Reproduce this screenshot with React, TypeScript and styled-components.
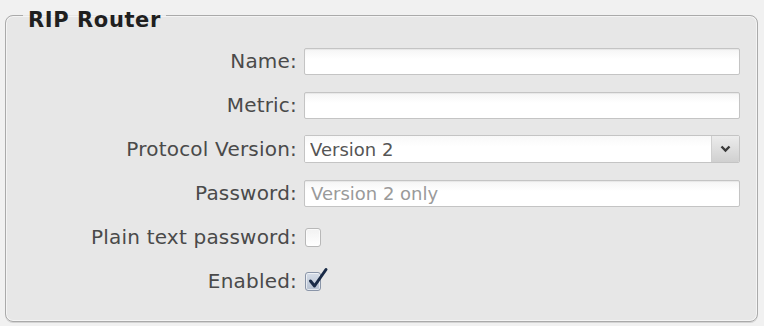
import React from "react";
import styled, { createGlobalStyle } from "styled-components";

const Global = createGlobalStyle`
  html, body { margin: 0; padding: 0; }
  body {
    background: #f1f1f1;
    font-family: "DejaVu Sans", Verdana, sans-serif;
    width: 764px;
    height: 326px;
    overflow: hidden;
  }
`;

const Page = styled.div`
  padding: 0 6px 0 5px;
`;

const Fieldset = styled.fieldset`
  margin: 0;
  padding: 8px 17px 18px 0;
  width: 753px;
  box-sizing: border-box;
  border: 1px solid #aaaaaa;
  border-radius: 8px;
  background: #e7e7e7;
  box-shadow: inset 0 0 0 1px rgba(255, 255, 255, 0.55), 0 1px 0 #d4d4d4;
  min-width: 0;
`;

const Legend = styled.legend`
  margin-left: 17px;
  padding: 9px 5px 0 5px;
  font-size: 21px;
  line-height: 22px;
  font-weight: bold;
  color: #1f1f1f;
  letter-spacing: 0.6px;
`;

const Grid = styled.div`
  display: grid;
  grid-template-columns: 291px 436px;
  column-gap: 7px;
  grid-auto-rows: 44px;
  align-items: center;
`;

const Label = styled.label`
  justify-self: end;
  font-size: 20px;
  color: #4a4a4a;
  white-space: nowrap;
  line-height: 24px;
  letter-spacing: 0.2px;
`;

const TextInput = styled.input`
  box-sizing: border-box;
  width: 100%;
  height: 27px;
  margin: 0;
  padding: 0 6px;
  border: 1px solid #c4c4c4;
  border-radius: 2px;
  background: linear-gradient(#f5f5f5, #ffffff 40%);
  box-shadow: inset 0 1px 1px rgba(0, 0, 0, 0.06);
  font-family: "DejaVu Sans", Verdana, sans-serif;
  font-size: 18px;
  color: #555;
  outline: none;
  &::placeholder {
    color: #9a9a9a;
  }
`;

const SelectBox = styled.div`
  display: flex;
  box-sizing: border-box;
  height: 28px;
  border: 1px solid #c4c4c4;
  border-radius: 2px;
  background: #fff;
  overflow: hidden;
`;

const Select = styled.select`
  flex: 1;
  appearance: none;
  -webkit-appearance: none;
  border: none;
  margin: 0;
  padding: 0 5px;
  background: linear-gradient(#f8f8f8, #ffffff 40%);
  font-family: "DejaVu Sans", Verdana, sans-serif;
  font-size: 18px;
  color: #555;
  outline: none;
`;

const ArrowButton = styled.div`
  width: 27px;
  display: flex;
  align-items: center;
  justify-content: center;
  border-left: 1px solid #cfcfcf;
  background: linear-gradient(#ececec, #d0d0d0);
`;

const CheckWrap = styled.span`
  position: relative;
  display: block;
  width: 16px;
  height: 19px;
  margin-left: 1px;
`;

const CheckBoxBox = styled.span<{ $checked?: boolean }>`
  display: block;
  box-sizing: border-box;
  width: 16px;
  height: 19px;
  border-radius: 3px;
  border: 1px solid ${(p) => (p.$checked ? "#8a95a8" : "#b8b8b8")};
  background: ${(p) =>
    p.$checked
      ? "linear-gradient(#d6dde8, #b6c1d1)"
      : "linear-gradient(#f2f2f2, #ffffff)"};
  box-shadow: inset 0 0 0 1px rgba(255, 255, 255, 0.6);
`;

const CheckMark = styled.svg`
  position: absolute;
  left: 2px;
  top: -5px;
`;

const CheckBox: React.FC<{ checked?: boolean }> = ({ checked }) => (
  <CheckWrap>
    <CheckBoxBox $checked={checked} />
    {checked && (
      <CheckMark width="22" height="22" viewBox="0 0 22 22">
        <path
          d="M3.5 14 L7.5 19 L19 2.5"
          fill="none"
          stroke="#1a2b47"
          strokeWidth="3"
          strokeLinecap="round"
          strokeLinejoin="round"
        />
      </CheckMark>
    )}
  </CheckWrap>
);

export default function App() {
  return (
    <>
      <Global />
      <Page>
        <Fieldset>
          <Legend>RIP Router</Legend>
          <Grid>
            <Label>Name:</Label>
            <TextInput />
            <Label>Metric:</Label>
            <TextInput />
            <Label>Protocol Version:</Label>
            <SelectBox>
              <Select defaultValue="2">
                <option value="1">Version 1</option>
                <option value="2">Version 2</option>
              </Select>
              <ArrowButton>
                <svg width="11" height="8" viewBox="0 0 11 8">
                  <path
                    d="M1.5 1.5 L5.5 5.5 L9.5 1.5"
                    fill="none"
                    stroke="#3a3a3a"
                    strokeWidth="2.4"
                  />
                </svg>
              </ArrowButton>
            </SelectBox>
            <Label>Password:</Label>
            <TextInput placeholder="Version 2 only" />
            <Label>Plain text password:</Label>
            <CheckBox />
            <Label>Enabled:</Label>
            <CheckBox checked />
          </Grid>
        </Fieldset>
      </Page>
    </>
  );
}
